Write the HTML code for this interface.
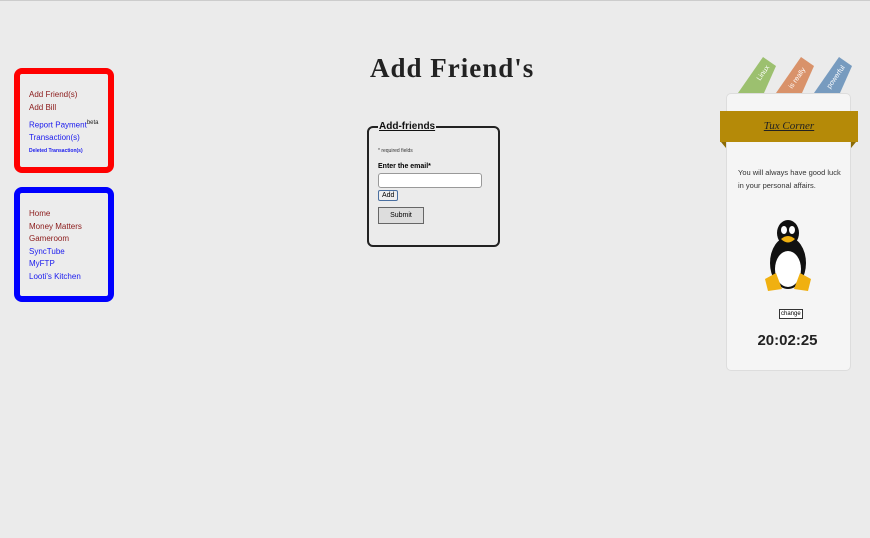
<!DOCTYPE html>
<html><head><meta charset="utf-8"><style>
body{margin:0;width:870px;height:538px;background:#ebebeb;font-family:"Liberation Sans",sans-serif;position:relative;overflow:hidden;border-top:1px solid #ccc;box-sizing:border-box}
.box{position:absolute;left:14px;width:88px;border:6px solid;border-radius:8px;background:#ececec;font-size:8px;line-height:12.5px}
.box a{display:block;text-decoration:none}
.r{color:#8b1a1a}.b{color:#1a1aee}
h1{position:absolute;left:370px;top:52px;margin:0;font-family:"Liberation Serif",serif;font-weight:bold;font-size:27px;color:#222;letter-spacing:1px}
.fs{position:absolute;left:367px;top:125px;width:120px;height:117px;border:2px solid #222;border-radius:6px;padding:0 0 0 9px;font-size:6px;box-sizing:content-box}
.lg{position:absolute;left:9px;top:-7px;background:#ebebeb;font-size:10px;font-weight:bold;color:#111;padding:0 1px;text-decoration:underline}
</style></head><body>
<div class="box" style="top:67px;height:93px;border-color:#f00">
<div style="padding:15px 0 0 9px">
<a class="r">Add Friend(s)</a><a class="r">Add Bill</a>
<a class="b" style="margin-top:3px">Report Payment<sup style="color:#222;font-size:6px">beta</sup></a>
<a class="b">Transaction(s)</a><a class="b" style="font-size:5px;font-weight:bold">Deleted Transaction(s)</a></div></div>
<div class="box" style="top:186px;height:103px;border-color:#00f">
<div style="padding:15px 0 0 9px">
<a class="r">Home</a><a class="r">Money Matters</a><a class="r">Gameroom</a><a class="b">SyncTube</a><a class="b">MyFTP</a><a class="b">Looti's Kitchen</a></div></div>
<h1>Add Friend's</h1>
<div class="fs"><div class="lg">Add-friends</div>
<div style="margin-top:20px;font-size:5px;color:#333">* required fields</div>
<div style="margin-top:9px;font-size:7px;font-weight:bold">Enter the email*</div>
<div style="width:102px;height:13px;border:1px solid #999;border-radius:3px;background:#fff;margin-top:3px"></div>
<div style="display:inline-block;border:1px solid #4a6fa0;border-radius:2px;font-size:7px;padding:1px 3px;margin-top:2px;background:#eee">Add</div>
<div style="width:44px;height:15px;border:1px solid #666;background:#ddd;font-size:7px;text-align:center;line-height:15px;margin-top:6px">Submit</div>
</div>
<svg style="position:absolute;left:730px;top:50px" width="130" height="50">
<polygon points="8,42 33,6 46,15 34,42" fill="#9cc06f"/>
<polygon points="46,42 71,6 84,15 72,42" fill="#d9926a"/>
<polygon points="84,42 109,6 122,15 110,42" fill="#779bbf"/>
<text x="30" y="30" transform="rotate(-55 30 30)" fill="#fff" font-size="7">Linux</text>
<text x="62" y="38" transform="rotate(-55 62 38)" fill="#fff" font-size="7">is really</text>
<text x="100" y="38" transform="rotate(-55 100 38)" fill="#fff" font-size="7">powerful</text>
</svg>
<div style="position:absolute;left:726px;top:92px;width:123px;height:276px;background:#f5f5f5;border:1px solid #ddd;border-radius:5px"></div>
<div style="position:absolute;left:720px;top:110px;width:138px;height:31px;background:#b58a08;text-align:center;line-height:31px;font-family:'Liberation Serif',serif;font-style:italic;font-size:11px;text-decoration:underline;color:#222">Tux Corner</div>
<div style="position:absolute;left:721px;top:141px;border-top:6px solid #8a6a06;border-left:5px solid transparent"></div>
<div style="position:absolute;left:851px;top:141px;border-top:6px solid #8a6a06;border-right:5px solid transparent"></div>
<div style="position:absolute;left:738px;top:165px;width:108px;font-size:7.5px;line-height:13px;color:#333">You will always have good luck in your personal affairs.</div>
<svg style="position:absolute;left:762px;top:218px" width="52" height="75" viewBox="0 0 52 75">
<ellipse cx="26" cy="44" rx="18" ry="26" fill="#111"/><ellipse cx="26" cy="14" rx="11" ry="13" fill="#111"/>
<ellipse cx="26" cy="50" rx="13" ry="18" fill="#fff"/>
<ellipse cx="22" cy="11" rx="3" ry="4" fill="#fff"/><ellipse cx="30" cy="11" rx="3" ry="4" fill="#fff"/>
<path d="M19 20 Q26 14 33 20 Q26 27 19 20Z" fill="#f0b010"/>
<path d="M3 60 L14 54 L20 70 L6 72 Z" fill="#f0b010"/><path d="M49 60 L38 54 L32 70 L46 72 Z" fill="#f0b010"/></svg>
<div style="position:absolute;left:779px;top:308px;border:1px solid #333;font-size:6px;padding:1px 1px;background:#fff">change</div>
<div style="position:absolute;left:726px;top:331px;width:123px;text-align:center;font-size:15px;font-weight:bold;color:#222">20:02:25</div>
</body></html>
